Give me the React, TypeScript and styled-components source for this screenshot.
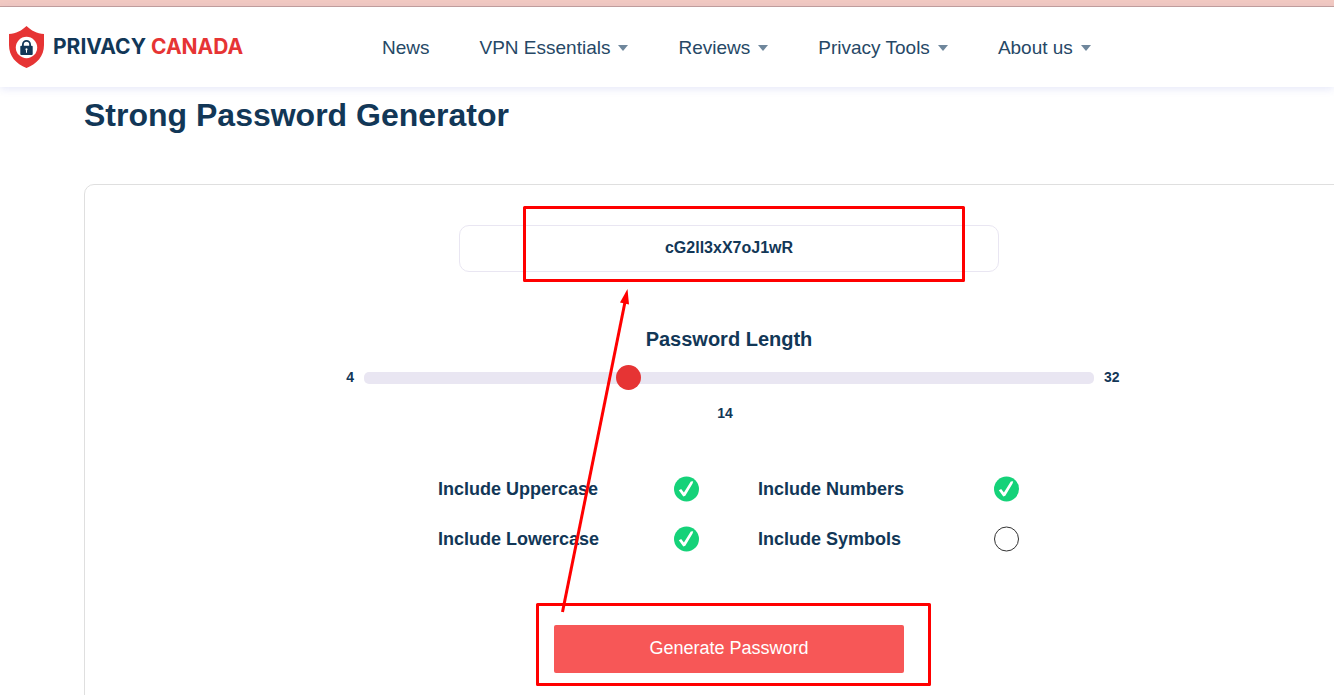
import React, { useState } from "react";
import styled, { createGlobalStyle } from "styled-components";

const navy = "#123757";
const red = "#e63434";

const GlobalStyle = createGlobalStyle`
  *, *::before, *::after { box-sizing: border-box; }
  body {
    margin: 0;
    background: #fff;
    color: ${navy};
    font-family: "Liberation Sans", Arial, sans-serif;
  }
`;

const Page = styled.div`
  min-height: 100vh;
  overflow: hidden;
`;

const NoticeBar = styled.div`
  height: 7px;
  background: #f1c9c2;
  border-bottom: 1px solid #c4a09b;
`;

const Header = styled.header`
  display: flex;
  align-items: center;
  height: 80px;
  padding: 0 8px;
  background: #fff;
  box-shadow: 0 2px 8px rgba(60, 80, 210, 0.13);
`;

const Brand = styled.a`
  display: flex;
  align-items: center;
  gap: 8px;
  width: 374px;
  flex: none;
  color: ${navy};
  font: 700 21px/24px Inter, sans-serif;
  text-decoration: none;
  white-space: nowrap;
`;

const BrandAccent = styled.span`
  color: ${red};
`;

const Nav = styled.nav`
  display: flex;
  gap: 50px;
  padding-top: 2px;
`;

const NavLink = styled.a`
  display: flex;
  align-items: center;
  gap: 8px;
  color: #264866;
  font-size: 19px;
  line-height: 24px;
  text-decoration: none;
  white-space: nowrap;
`;

const Main = styled.main`
  padding-left: 84px;
`;

const Title = styled.h1`
  margin: 0;
  padding: 10px 0 51px;
  font-size: 32px;
  line-height: 36px;
`;

const Card = styled.section`
  display: flex;
  flex-direction: column;
  align-items: center;
  width: calc(100% + 40px);
  padding: 40px 0 60px;
  border: 1px solid #dfdfdf;
  border-radius: 10px;
`;

const Tool = styled.form`
  position: relative;
  display: flex;
  flex-direction: column;
  align-items: center;
  width: 100%;
  max-width: 790px;
`;

const PasswordField = styled.input`
  width: 540px;
  height: 47px;
  padding: 0 10px 2px;
  border: 1px solid #e9e6f2;
  border-radius: 10px;
  background: #fff;
  color: ${navy};
  font: 700 16px/20px "Liberation Sans", Arial, sans-serif;
  text-align: center;
  outline: none;
`;

const LengthLabel = styled.label`
  margin-top: 55px;
  font-size: 20px;
  font-weight: 700;
  line-height: 24px;
`;

const SliderRow = styled.div`
  display: grid;
  grid-template-columns: 20px minmax(0, 1fr) 20px;
  align-items: center;
  column-gap: 10px;
  width: 100%;
  margin-top: 14px;
  font-size: 14px;
  font-weight: 700;
  line-height: 24px;
`;

const Bound = styled.span<{ $align: "left" | "right" }>`
  padding-bottom: 1px;
  text-align: ${(p) => p.$align};
`;

const Slider = styled.input`
  appearance: none;
  width: 100%;
  height: 25px;
  margin: 0;
  background: transparent;

  &::-webkit-slider-runnable-track {
    height: 12px;
    border-radius: 5px;
    background: #e9e6f2;
  }

  &::-webkit-slider-thumb {
    appearance: none;
    width: 25px;
    height: 25px;
    margin-top: -7px;
    border-radius: 50%;
    background: ${red};
  }
`;

const LengthValue = styled.output`
  margin-top: 11px;
  padding-right: 8px;
  font-size: 14px;
  font-weight: 700;
  line-height: 24px;
`;

const Options = styled.div`
  display: grid;
  grid-template-columns: 262px 262px;
  column-gap: 58px;
  row-gap: 24px;
  margin-top: 51px;
`;

const Option = styled.label`
  display: flex;
  align-items: center;
  justify-content: space-between;
  font-size: 18px;
  font-weight: 700;
  line-height: 26px;
`;

const TickBox = styled.span`
  display: grid;
  width: 26px;
  height: 26px;

  > * {
    grid-area: 1 / 1;
  }
`;

const TickInput = styled.input`
  width: 26px;
  height: 26px;
  margin: 0;
  opacity: 0;
`;

const GenerateButton = styled.button`
  width: 350px;
  height: 48px;
  margin-top: 73px;
  padding: 0 0 2px;
  border: 0;
  border-radius: 2px;
  background: #f75757;
  color: #fff;
  font: 400 18px/24px "Liberation Sans", Arial, sans-serif;
`;

const Annotation = styled.svg`
  position: absolute;
  top: -20px;
  left: 50%;
  margin-left: -206px;
  pointer-events: none;
`;

function ShieldLogo() {
  return (
    <svg width="37" height="42" viewBox="0 0 37 42" aria-hidden="true">
      <path
        fill={red}
        d="M18.500 0C14 4.500 8 7.500 1 8V19C1 30 8 38 18.500 42C29 38 36 30 36 19V8C29 7.500 23 4.500 18.500 0Z"
      />
      <circle cx="18.500" cy="21.500" r="10.700" fill="#fff" />
      <path
        fill="none"
        stroke={navy}
        strokeWidth="1.800"
        d="M14.900 20V18.500a3.600 3.600 0 0 1 7.200 0V20"
      />
      <rect x="12.300" y="19.700" width="12.400" height="9.300" rx="1" fill={navy} />
      <path fill="#fff" d="M18.500 22.200a1.200 1.200 0 0 1 .5 2.200V26.800h-1v-2.400A1.200 1.200 0 0 1 18.500 22.200Z" />
    </svg>
  );
}

function Caret() {
  return (
    <svg width="10" height="6" viewBox="0 0 10 6" aria-hidden="true">
      <path fill="#6f879c" d="M0 0H10L5 6Z" />
    </svg>
  );
}

function Tick({ checked }: { checked: boolean }) {
  return (
    <svg width="26" height="26" viewBox="0 0 26 26" aria-hidden="true">
      {checked ? (
        <>
          <circle cx="12.500" cy="13" r="12.500" fill="#15d279" />
          <path
            fill="#fff"
            d="M4.800 14.200L7.200 13L9.900 16.600L16.800 5.600L19.200 5.200L18.600 7.400L11.300 19.800L9.300 20.500Z"
          />
        </>
      ) : (
        <circle cx="12.500" cy="13" r="12" fill="#fff" stroke="#333" />
      )}
    </svg>
  );
}

const navItems = [
  { label: "News", menu: false },
  { label: "VPN Essentials", menu: true },
  { label: "Reviews", menu: true },
  { label: "Privacy Tools", menu: true },
  { label: "About us", menu: true },
];

const optionNames = ["Uppercase", "Numbers", "Lowercase", "Symbols"];

export default function App() {
  const [length, setLength] = useState(14);
  const [enabled, setEnabled] = useState<Record<string, boolean>>({
    Uppercase: true,
    Numbers: true,
    Lowercase: true,
    Symbols: false,
  });

  return (
    <Page>
      <GlobalStyle />
      <NoticeBar />
      <Header>
        <Brand href="#">
          <ShieldLogo />
          <span>
            PRIVACY <BrandAccent>CANADA</BrandAccent>
          </span>
        </Brand>
        <Nav>
          {navItems.map((item) => (
            <NavLink key={item.label} href="#">
              {item.label}
              {item.menu && <Caret />}
            </NavLink>
          ))}
        </Nav>
      </Header>
      <Main>
        <Title>Strong Password Generator</Title>
        <Card>
          <Tool onSubmit={(e) => e.preventDefault()}>
            <PasswordField aria-label="Generated password" readOnly value="cG2ll3xX7oJ1wR" />
            <LengthLabel htmlFor="length">Password Length</LengthLabel>
            <SliderRow>
              <Bound $align="right">4</Bound>
              <Slider
                id="length"
                type="range"
                min={4}
                max={32}
                value={length}
                onChange={(e) => setLength(Number(e.target.value))}
              />
              <Bound $align="left">32</Bound>
            </SliderRow>
            <LengthValue htmlFor="length">{length}</LengthValue>
            <Options>
              {optionNames.map((name) => (
                <Option key={name}>
                  Include {name}
                  <TickBox>
                    <Tick checked={enabled[name]} />
                    <TickInput
                      type="checkbox"
                      checked={enabled[name]}
                      onChange={(e) => setEnabled({ ...enabled, [name]: e.target.checked })}
                    />
                  </TickBox>
                </Option>
              ))}
            </Options>
            <GenerateButton type="submit">Generate Password</GenerateButton>
            <Annotation width="442" height="481" viewBox="0 0 442 481" aria-hidden="true">
              <g fill="none" stroke="#f00" strokeWidth="3" strokeLinejoin="round">
                <rect x="1.500" y="2.500" width="439" height="73" />
                <rect x="14.500" y="399.500" width="392" height="80" />
                <path d="M39.500 407L102 97" />
              </g>
              <path fill="#f00" d="M104.500 84L106 99.500L97 97.500Z" />
            </Annotation>
          </Tool>
        </Card>
      </Main>
    </Page>
  );
}
